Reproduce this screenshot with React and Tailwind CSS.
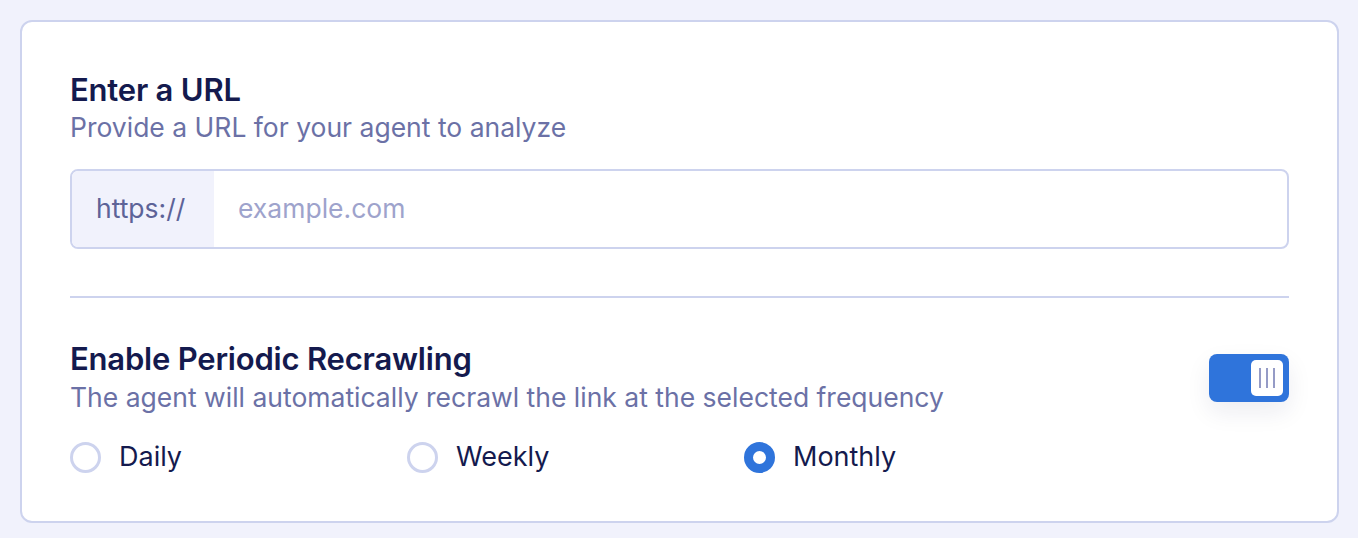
import React from "react";

function Radio({ label, checked }) {
  return (
    <label className="flex items-center w-[337px] h-8 gap-[18px] cursor-pointer">
      {checked ? (
        <span className="w-[31px] h-[31px] rounded-full border-[9px] border-[#2f74db] bg-white shrink-0" />
      ) : (
        <span className="w-[31px] h-[31px] rounded-full border-[3px] border-[#cdd3ee] bg-white shrink-0" />
      )}
      <span className="text-[27px] text-[#141a4e] leading-8">{label}</span>
    </label>
  );
}

export default function App() {
  return (
    <div
      className="w-[1358px] h-[538px] bg-[#f1f2fc] pt-[20px] pl-[20px]"
      style={{ fontFamily: "Inter, 'Noto Sans', sans-serif" }}
    >
      <div className="w-[1319px] h-[503px] bg-white border-2 border-[#cdd3ee] rounded-[12px] pt-[50px] px-[48px]">
        <h2 className="text-[31px] font-semibold leading-9 text-[#141a4e] tracking-[-0.2px]">Enter a URL</h2>
        <p className="mt-[2px] text-[26.5px] leading-[34px] text-[#6b71a6]">Provide a URL for your agent to analyze</p>

        <div className="mt-[25px] flex h-[80px] border-2 border-[#cdd3ee] rounded-[8px] overflow-hidden">
          <div className="w-[142px] bg-[#f1f2fc] flex items-center pl-[24px] text-[26.5px] text-[#5d6398]">https://</div>
          <div className="flex-1 flex items-center pl-[24px] text-[26.5px] text-[#9ea3cc]">example.com</div>
        </div>

        <div className="mt-[47px] h-[2px] bg-[#cdd3ee]" />

        <div className="mt-[43px] flex items-center justify-between">
          <div>
            <h2 className="text-[31px] font-semibold leading-9 text-[#141a4e] tracking-[-0.2px]">Enable Periodic Recrawling</h2>
            <p className="mt-[3px] text-[26.5px] leading-[34px] text-[#6b71a6]">The agent will automatically recrawl the link at the selected frequency</p>
          </div>
          <div className="w-[80px] h-[48px] rounded-[8px] bg-[#2f74db] flex items-center justify-end pr-[6px] shadow-[0_10px_24px_rgba(20,26,78,0.08)]">
            <div className="w-[32px] h-[36px] bg-white rounded-[5px] flex items-center justify-center gap-[5px]">
              <span className="w-[2px] h-[20px] bg-[#959bc6]" />
              <span className="w-[2px] h-[20px] bg-[#959bc6]" />
              <span className="w-[2px] h-[20px] bg-[#959bc6]" />
            </div>
          </div>
        </div>

        <div className="mt-[27px] flex">
          <Radio label="Daily" />
          <Radio label="Weekly" />
          <Radio label="Monthly" checked />
        </div>
      </div>
    </div>
  );
}
